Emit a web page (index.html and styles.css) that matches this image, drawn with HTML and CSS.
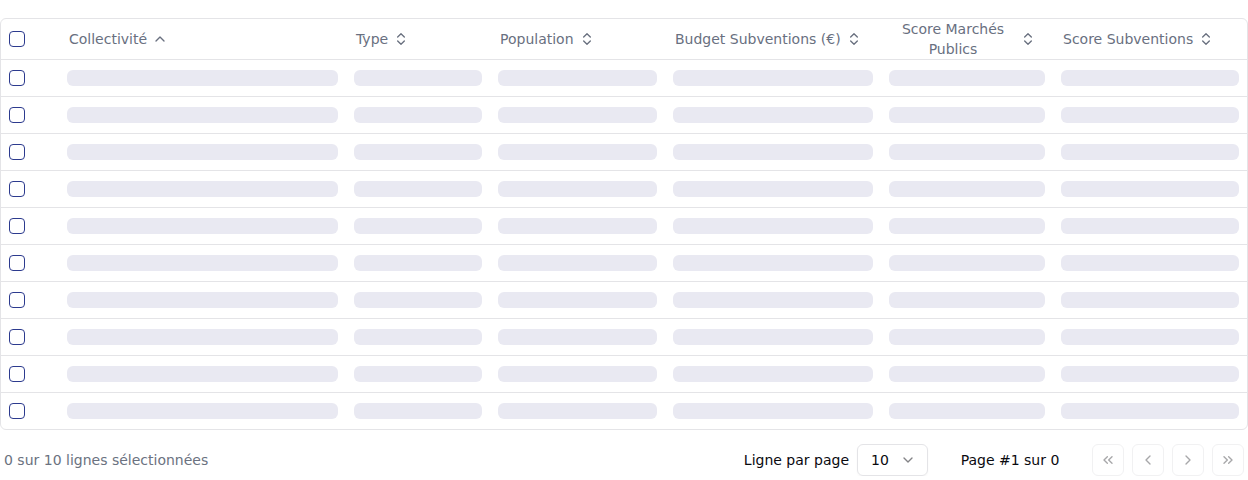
FILE: index.html
```html
<!DOCTYPE html>
<html lang="fr">
<head>
<meta charset="utf-8">
<title>Collectivités</title>
<link rel="stylesheet" href="styles.css">
</head>
<body>
<div class="page">
  <div class="table-wrap">
    <table class="grid">
      <colgroup>
        <col class="c-check"><col class="c-1"><col class="c-2"><col class="c-3"><col class="c-4"><col class="c-5"><col class="c-6">
      </colgroup>
      <thead>
        <tr>
          <th class="check-cell"><span class="checkbox"></span></th>
          <th><button class="sort"><span class="label">Collectivité</span><svg class="ico" viewBox="0 0 24 24"><path d="m18 15-6-6-6 6"/></svg></button></th>
          <th><button class="sort"><span class="label">Type</span><svg class="ico" viewBox="0 0 24 24"><path d="m7 15 5 5 5-5"/><path d="m7 9 5-5 5 5"/></svg></button></th>
          <th><button class="sort"><span class="label">Population</span><svg class="ico" viewBox="0 0 24 24"><path d="m7 15 5 5 5-5"/><path d="m7 9 5-5 5 5"/></svg></button></th>
          <th><button class="sort"><span class="label">Budget Subventions (€)</span><svg class="ico" viewBox="0 0 24 24"><path d="m7 15 5 5 5-5"/><path d="m7 9 5-5 5 5"/></svg></button></th>
          <th><button class="sort"><span class="label wrap">Score Marchés Publics</span><svg class="ico" viewBox="0 0 24 24"><path d="m7 15 5 5 5-5"/><path d="m7 9 5-5 5 5"/></svg></button></th>
          <th><button class="sort"><span class="label">Score Subventions</span><svg class="ico" viewBox="0 0 24 24"><path d="m7 15 5 5 5-5"/><path d="m7 9 5-5 5 5"/></svg></button></th>
        </tr>
      </thead>
      <tbody>
        <tr><td class="check-cell"><span class="checkbox"></span></td><td><div class="sk"></div></td><td><div class="sk"></div></td><td><div class="sk"></div></td><td><div class="sk"></div></td><td><div class="sk"></div></td><td><div class="sk"></div></td></tr>
        <tr><td class="check-cell"><span class="checkbox"></span></td><td><div class="sk"></div></td><td><div class="sk"></div></td><td><div class="sk"></div></td><td><div class="sk"></div></td><td><div class="sk"></div></td><td><div class="sk"></div></td></tr>
        <tr><td class="check-cell"><span class="checkbox"></span></td><td><div class="sk"></div></td><td><div class="sk"></div></td><td><div class="sk"></div></td><td><div class="sk"></div></td><td><div class="sk"></div></td><td><div class="sk"></div></td></tr>
        <tr><td class="check-cell"><span class="checkbox"></span></td><td><div class="sk"></div></td><td><div class="sk"></div></td><td><div class="sk"></div></td><td><div class="sk"></div></td><td><div class="sk"></div></td><td><div class="sk"></div></td></tr>
        <tr><td class="check-cell"><span class="checkbox"></span></td><td><div class="sk"></div></td><td><div class="sk"></div></td><td><div class="sk"></div></td><td><div class="sk"></div></td><td><div class="sk"></div></td><td><div class="sk"></div></td></tr>
        <tr><td class="check-cell"><span class="checkbox"></span></td><td><div class="sk"></div></td><td><div class="sk"></div></td><td><div class="sk"></div></td><td><div class="sk"></div></td><td><div class="sk"></div></td><td><div class="sk"></div></td></tr>
        <tr><td class="check-cell"><span class="checkbox"></span></td><td><div class="sk"></div></td><td><div class="sk"></div></td><td><div class="sk"></div></td><td><div class="sk"></div></td><td><div class="sk"></div></td><td><div class="sk"></div></td></tr>
        <tr><td class="check-cell"><span class="checkbox"></span></td><td><div class="sk"></div></td><td><div class="sk"></div></td><td><div class="sk"></div></td><td><div class="sk"></div></td><td><div class="sk"></div></td><td><div class="sk"></div></td></tr>
        <tr><td class="check-cell"><span class="checkbox"></span></td><td><div class="sk"></div></td><td><div class="sk"></div></td><td><div class="sk"></div></td><td><div class="sk"></div></td><td><div class="sk"></div></td><td><div class="sk"></div></td></tr>
        <tr><td class="check-cell"><span class="checkbox"></span></td><td><div class="sk"></div></td><td><div class="sk"></div></td><td><div class="sk"></div></td><td><div class="sk"></div></td><td><div class="sk"></div></td><td><div class="sk"></div></td></tr>
      </tbody>
    </table>
  </div>
  <div class="footer">
    <div class="selected">0 sur 10 lignes sélectionnées</div>
    <div class="controls">
      <div class="per-page">
        <span class="pp-label">Ligne par page</span>
        <div class="select"><span>10</span><svg class="ico dim" viewBox="0 0 24 24"><path d="m6 9 6 6 6-6"/></svg></div>
      </div>
      <div class="page-info">Page #1 sur 0</div>
      <div class="pager">
        <button class="pbtn"><svg class="ico" viewBox="0 0 24 24"><path d="m11 17-5-5 5-5"/><path d="m18 17-5-5 5-5"/></svg></button>
        <button class="pbtn"><svg class="ico" viewBox="0 0 24 24"><path d="m15 18-6-6 6-6"/></svg></button>
        <button class="pbtn"><svg class="ico" viewBox="0 0 24 24"><path d="m9 18 6-6-6-6"/></svg></button>
        <button class="pbtn"><svg class="ico" viewBox="0 0 24 24"><path d="m6 17 5-5-5-5"/><path d="m13 17 5-5-5-5"/></svg></button>
      </div>
    </div>
  </div>
</div>
</body>
</html>
```

FILE: styles.css
```css
* { box-sizing: border-box; }
html, body { margin: 0; padding: 0; background: #ffffff; }
body {
  font-family: "DejaVu Sans", "Noto Sans", sans-serif;
  font-size: 14px;
  color: #0a0a0f;
}
.page { padding-top: 18px; width: 1248px; }
.table-wrap {
  border: 1px solid #e4e4e7;
  border-radius: 6px;
  overflow: hidden;
}
.grid {
  width: 1246px;
  border-collapse: separate;
  border-spacing: 0;
  table-layout: fixed;
}
.c-check { width: 58px; }
.c-1 { width: 287px; }
.c-2 { width: 144px; }
.c-3 { width: 175px; }
.c-4 { width: 216px; }
.c-5 { width: 172px; }
.c-6 { width: 194px; }
th, td { padding: 0 8px; vertical-align: middle; text-align: left; }
th {
  height: 41px;
  border-bottom: 1px solid #e4e4e7;
  font-weight: normal;
  color: #69707f;
}
td {
  height: 37px;
  border-bottom: 1px solid #e4e4e7;
}
tbody tr:last-child td { border-bottom: none; height: 36px; }
.check-cell { padding-left: 8px; }
.checkbox {
  display: block;
  width: 16px;
  height: 16px;
  border: 1px solid #2c3a8e;
  border-radius: 4px;
  background: #fff;
}
.sort {
  display: flex;
  align-items: center;
  gap: 5px;
  border: 0;
  background: none;
  padding: 0 2px;
  font: inherit;
  color: inherit;
  line-height: 20px;
  cursor: pointer;
}
.label { text-align: left; }
.label.wrap { width: 124px; text-align: center; }
.ico {
  width: 16px;
  height: 16px;
  flex: none;
  fill: none;
  stroke: currentColor;
  stroke-width: 2;
  stroke-linecap: round;
  stroke-linejoin: round;
}
.sk {
  height: 16px;
  border-radius: 6px;
  background: #e9e9f2;
}
.footer {
  display: flex;
  justify-content: space-between;
  align-items: center;
  margin-top: 14px;
  padding: 0 4px;
  height: 32px;
}
.selected { color: #6b7280; }
.controls { display: flex; align-items: center; }
.per-page { display: flex; align-items: center; gap: 8px; }
.select {
  display: flex;
  align-items: center;
  justify-content: space-between;
  width: 71px;
  height: 32px;
  padding: 0 11px 0 13px;
  border: 1px solid #e4e4e7;
  border-radius: 6px;
  box-shadow: 0 1px 2px rgba(0,0,0,0.04);
}
.dim { opacity: 0.5; }
.page-info { width: 116px; margin: 0 24px; text-align: center; }
.pager { display: flex; gap: 8px; }
.pbtn {
  width: 32px;
  height: 32px;
  display: flex;
  align-items: center;
  justify-content: center;
  padding: 0;
  border: 1px solid #e4e4e7;
  border-radius: 6px;
  background: #fff;
  color: #0a0a0f;
  opacity: 0.5;
}
.pbtn .ico { opacity: 0.7; }
```
